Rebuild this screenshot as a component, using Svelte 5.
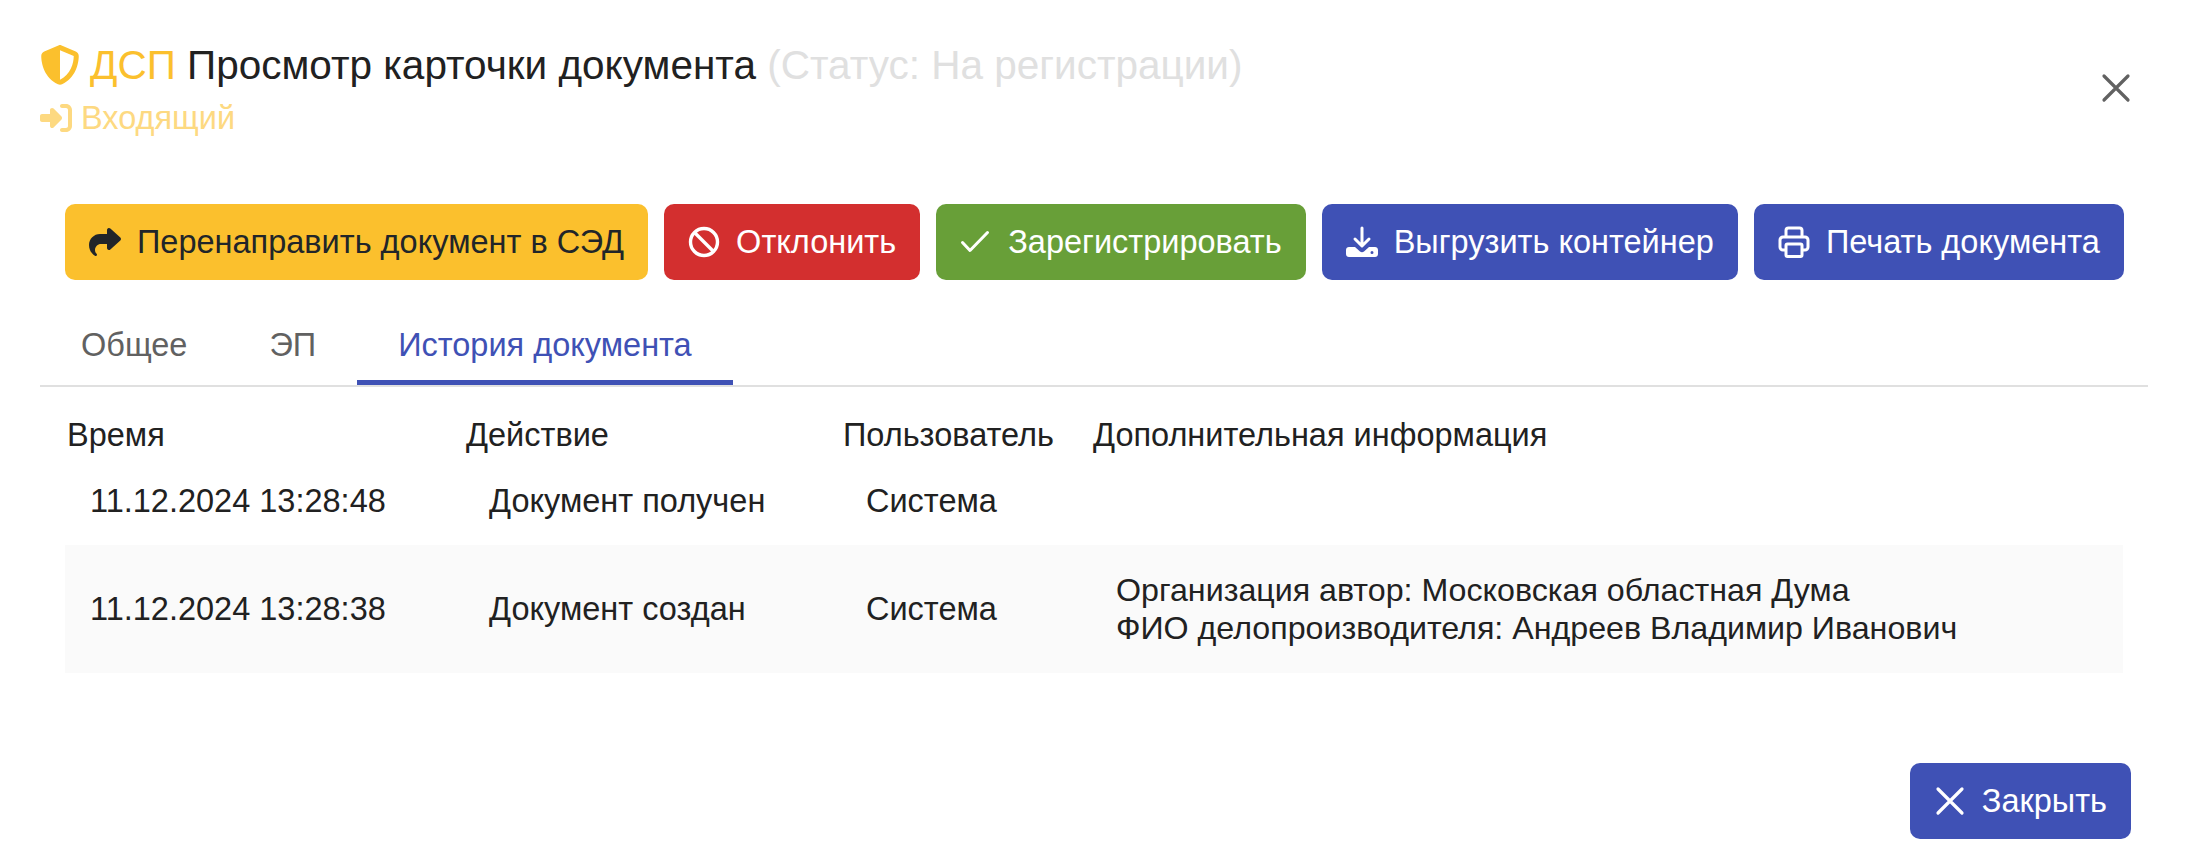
<script>
	const actions = [
		{ label: 'Перенаправить документ в СЭД', tone: 'warn', icon: 'share' },
		{ label: 'Отклонить', tone: 'danger', icon: 'ban' },
		{ label: 'Зарегистрировать', tone: 'ok', icon: 'check' },
		{ label: 'Выгрузить контейнер', tone: 'main', icon: 'download' },
		{ label: 'Печать документа', tone: 'main', icon: 'print' }
	];
	const tabs = ['Общее', 'ЭП', 'История документа'];
	const rows = [
		{ time: '11.12.2024 13:28:48', action: 'Документ получен', user: 'Система', info: [] },
		{
			time: '11.12.2024 13:28:38',
			action: 'Документ создан',
			user: 'Система',
			info: ['Организация автор: Московская областная Дума', 'ФИО делопроизводителя: Андреев Владимир Иванович']
		}
	];
</script>

{#snippet icon(name)}
	{#if name === 'share'}
		<svg class="ico" viewBox="0 0 512 512"><path fill="currentColor" d="M307 34.8c-11.5 5.1-19 16.6-19 29.2v64H176C78.8 128 0 206.8 0 304C0 417.3 81.5 467.9 100.2 478.1c2.5 1.4 5.3 1.9 8.1 1.9c10.9 0 19.7-8.9 19.7-19.7c0-7.5-4.3-14.4-9.8-19.5C108.8 431.9 96 414.4 96 384c0-53 43-96 96-96h96v64c0 12.6 7.4 24.1 19 29.2s25 3 34.4-5.4l160-144c6.7-6.1 10.6-14.7 10.6-23.8s-3.8-17.7-10.6-23.8l-160-144c-9.4-8.5-22.9-10.6-34.4-5.4z"/></svg>
	{:else if name === 'ban'}
		<svg class="ico" viewBox="0 0 32 32" fill="none" stroke="currentColor" stroke-width="3.4"><circle cx="16" cy="16" r="13.5"/><path d="M6.5 6.5l19 19"/></svg>
	{:else if name === 'check'}
		<svg class="ico" viewBox="0 0 32 32" fill="none" stroke="currentColor" stroke-width="3" stroke-linecap="round" stroke-linejoin="round"><path d="M2.500 16.500l7.500 8L27.500 6.500"/></svg>
	{:else if name === 'download'}
		<svg class="ico" viewBox="0 0 32 32"><path fill="none" stroke="currentColor" stroke-width="3" stroke-linecap="round" stroke-linejoin="round" d="M16 2v17M9 13l7 7 7-7"/><path fill="currentColor" fill-rule="evenodd" d="M3 21h6l5 4.500c1.200 1 2.800 1 4 0L23 21h6c1.700 0 3 1.300 3 3v4c0 1.700-1.300 3-3 3H3c-1.700 0-3-1.300-3-3v-4c0-1.700 1.300-3 3-3zm23 4a1.500 1.500 0 1 0 0 3 1.500 1.500 0 0 0 0-3z"/></svg>
	{:else if name === 'print'}
		<svg class="ico" viewBox="0 0 32 32" fill="none" stroke="currentColor" stroke-width="3" stroke-linejoin="round"><path d="M8 11V4.500C8 3 9 2 10.500 2h11C23 2 24 3 24 4.500V11"/><path d="M8 24H5c-1.700 0-3-1.300-3-3v-7c0-1.700 1.300-3 3-3h22c1.700 0 3 1.300 3 3v7c0 1.700-1.300 3-3 3h-3"/><rect x="8" y="18" width="16" height="12.500" rx="1.500"/></svg>
	{:else if name === 'close'}
		<svg class="ico" viewBox="0 0 32 32" fill="none" stroke="currentColor" stroke-width="3.2" stroke-linecap="round"><path d="M4 4l24 24M28 4L4 28"/></svg>
	{/if}
{/snippet}

<div class="dialog">
	<header class="head">
		<div>
			<div class="title">
				<svg class="shield" viewBox="0 0 512 512"><path fill="currentColor" fill-rule="evenodd" d="M256 0c4.600 0 9.200 1 13.400 2.900L457.700 82.800c22 9.300 38.400 31 38.300 57.200-.5 99.200-41.300 280.700-213.600 363.200-16.700 8-36.100 8-52.800 0C57.300 420.700 16.500 239.200 16 140c-.1-26.200 16.300-47.900 38.300-57.200L242.700 2.900C246.800 1 251.400 0 256 0zm0 66.800V444.800C394 378 431.100 230.100 432 141.400L256 66.800z"/></svg>
				<span><span class="dsp">ДСП</span> Просмотр карточки документа <span class="status">(Статус: На регистрации)</span></span>
			</div>
			<div class="kind">
				<svg class="kind-ico" viewBox="0 0 512 512"><path fill="currentColor" d="M217.900 105.900L340.700 228.700c7.200 7.200 11.300 17.100 11.300 27.300s-4.100 20.100-11.300 27.300L217.900 406.100c-6.400 6.400-15 9.900-24 9.900c-18.700 0-33.900-15.200-33.900-33.900l0-62.100L32 320c-17.700 0-32-14.300-32-32l0-64c0-17.700 14.300-32 32-32l128 0 0-62.100c0-18.700 15.200-33.900 33.900-33.900c9 0 17.600 3.600 24 9.900zM352 416l64 0c17.700 0 32-14.300 32-32l0-256c0-17.700-14.300-32-32-32l-64 0c-17.700 0-32-14.300-32-32s14.300-32 32-32l64 0c53 0 96 43 96 96l0 256c0 53-43 96-96 96l-64 0c-17.700 0-32-14.300-32-32s14.300-32 32-32z"/></svg>
				Входящий
			</div>
		</div>
		<button class="x" aria-label="Закрыть">{@render icon('close')}</button>
	</header>

	<div class="actions">
		{#each actions as a}
			<button class="btn {a.tone}">{@render icon(a.icon)}{a.label}</button>
		{/each}
	</div>

	<nav class="tabs">
		{#each tabs as t, i}
			<div class="tab" class:active={i === 2}>{t}</div>
		{/each}
	</nav>

	<div class="table">
		<div class="row th">
			<div>Время</div>
			<div>Действие</div>
			<div>Пользователь</div>
			<div>Дополнительная информация</div>
		</div>
		{#each rows as r, i}
			<div class="row td" class:odd={i % 2 === 1}>
				<div>{r.time}</div>
				<div>{r.action}</div>
				<div>{r.user}</div>
				<div class="info">
					{#each r.info as line}<div>{line}</div>{/each}
				</div>
			</div>
		{/each}
	</div>

	<footer class="foot">
		<button class="btn main">{@render icon('close')}Закрыть</button>
	</footer>
</div>

<style>
	:global(body) {
		margin: 0;
		background: #fff;
	}

	.dialog {
		width: 2188px;
		height: 862px;
		box-sizing: border-box;
		padding: 42px 40px 0;
		font-family: "Liberation Sans", Arial, sans-serif;
		color: #212121;
	}

	.head {
		display: flex;
		justify-content: space-between;
		align-items: flex-start;
		height: 122px;
	}

	.title {
		display: flex;
		align-items: center;
		gap: 10px;
		font-size: 40.500px;
		line-height: 46px;
		white-space: pre;
	}

	.shield {
		width: 40px;
		height: 40px;
		color: #fbc02d;
	}

	.dsp {
		color: #fbc02d;
	}

	.status {
		color: #e0e0e0;
	}

	.kind {
		display: flex;
		align-items: center;
		gap: 9px;
		font-size: 32.500px;
		line-height: 36px;
		color: #fdd981;
		margin-top: 12px;
	}

	.kind-ico {
		width: 32px;
		height: 32px;
	}

	.x {
		width: 48px;
		height: 48px;
		margin: 22px 8px 0 0;
		padding: 8px;
		border: 0;
		background: none;
		color: #616161;
		display: flex;
	}

	.actions {
		display: flex;
		gap: 16px;
		padding: 40px 25px 0;
	}

	.btn {
		height: 76px;
		box-sizing: border-box;
		display: inline-flex;
		align-items: center;
		gap: 16px;
		padding: 0 24px;
		border: 0;
		border-radius: 10px;
		font: inherit;
		font-size: 32.500px;
		white-space: nowrap;
	}

	.ico {
		width: 32px;
		height: 32px;
		flex: none;
	}

	.warn {
		background: #fbc02d;
		color: #212529;
	}

	.danger {
		background: #d32f2f;
		color: #fff;
	}

	.ok {
		background: #689f38;
		color: #fff;
	}

	.main {
		background: #3f51b5;
		color: #fff;
	}

	.tabs {
		display: flex;
		margin-top: 24px;
		border-bottom: 2px solid #e0e0e0;
	}

	.tab {
		padding: 11px 41px 0;
		height: 81px;
		box-sizing: border-box;
		line-height: 60px;
		font-size: 32.500px;
		color: #616161;
		border-bottom: 5px solid transparent;
	}

	.tab.active {
		color: #3f51b5;
		border-color: #3f51b5;
	}

	.table {
		margin: 0 25px;
		font-size: 32.500px;
	}

	.row {
		display: grid;
		grid-template-columns: 399px 377px 250px 1fr;
		align-items: center;
	}

	.th {
		padding: 21px 0 0 2px;
		height: 54px;
	}

	.td {
		box-sizing: border-box;
		min-height: 83px;
		padding-bottom: 6px;
		line-height: 38px;
	}

	.td > div {
		padding-left: 25px;
	}

	.td .info {
		font-size: 32.200px;
	}

	.td.odd {
		min-height: 128px;
		padding-bottom: 0;
		background: #fafafa;
	}

	.foot {
		display: flex;
		justify-content: flex-end;
		margin: 90px 17px 0 0;
	}
</style>
